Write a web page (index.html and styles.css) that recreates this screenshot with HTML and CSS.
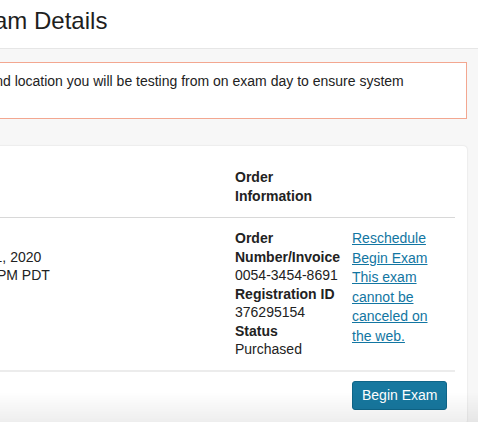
FILE: index.html
```html
<!DOCTYPE html>
<html lang="en">
<head>
<meta charset="utf-8">
<title>Exam Details</title>
<link rel="stylesheet" href="styles.css">
</head>
<body>
<header class="topbar">
  <div class="inner">
    <h1 class="title">Exam Details</h1>
  </div>
</header>
<main class="page">
  <div class="alert">Please verify your computer and location you will be testing from on exam day to ensure system compatibility.</div>
  <section class="card">
    <div class="row head">
      <div class="cell">Exam</div>
      <div class="cell">When</div>
      <div class="cell">Order Information</div>
      <div class="cell"></div>
    </div>
    <div class="row body">
      <div class="cell"><b>Exam</b><br>Cloud Practitioner</div>
      <div class="cell"><b>Date</b><br>July 21, 2020<br>12:00 PM PDT</div>
      <div class="cell">
        <b>Order Number/Invoice</b><br>0054-3454-8691<br>
        <b>Registration ID</b><br>376295154<br>
        <b>Status</b><br>Purchased
      </div>
      <div class="cell links">
        <a href="#">Reschedule</a>
        <a href="#">Begin Exam</a>
        <a href="#">This exam cannot be canceled on the web.</a>
      </div>
    </div>
    <div class="row foot">
      <button class="btn" type="button">Begin Exam</button>
    </div>
  </section>
</main>
<div class="fade"></div>
</body>
</html>
```
FILE: styles.css
```css
html, body {
  margin: 0;
  padding: 0;
  overflow: hidden;
}
body {
  background: #f7f7f7;
  font-family: "Liberation Sans", Arial, sans-serif;
  font-size: 14px;
  color: #222;
  width: 478px;
  height: 422px;
}
.topbar {
  background: #fff;
  border-bottom: 1px solid #e6e6e6;
  height: 48px;
}
.inner {
  margin-left: -250px;
  width: 717px;
  padding-top: 7px;
}
.title {
  margin: 0;
  padding-left: 216px;
  font-size: 24px;
  line-height: 28px;
  font-weight: normal;
  color: #1e1e1e;
}
.page {
  margin-left: -250px;
  width: 717px;
  padding-top: 13px;
}
.alert {
  margin-left: 44px;
  background: #fff;
  border: 1px solid #f3a790;
  padding: 9px 15px 10px;
  line-height: 18px;
  color: #222;
}
.card {
  margin-top: 27px;
  background: #fff;
  border-radius: 4px;
  box-shadow: 0 0 2px rgba(0, 0, 0, 0.14);
  padding: 12px 12px 14px;
}
.row {
  display: grid;
  grid-template-columns: 196px 277px 117px 1fr;
}
.head {
  font-weight: bold;
  line-height: 19px;
  padding: 10px 0 11px;
  border-bottom: 1px solid #d8d8d8;
}
.head .cell {
  padding-right: 12px;
}
.body {
  padding: 11px 0 11px;
  line-height: 18.5px;
  border-bottom: 2px solid #ececec;
}
.body .cell {
  padding-right: 12px;
}
.links {
  display: flex;
  flex-direction: column;
  line-height: 19.5px;
}
.links a {
  color: #1276a2;
  text-decoration: underline;
}
.foot {
  padding-top: 9px;
}
.btn {
  grid-column: 4;
  justify-self: start;
  font-family: "Liberation Sans", Arial, sans-serif;
  font-size: 14px;
  line-height: 17px;
  color: #fff;
  background: #17789f;
  border: 1px solid #0f6588;
  border-radius: 3px;
  padding: 5px 9px;
  cursor: pointer;
}
.fade {
  position: fixed;
  left: 0;
  right: 0;
  bottom: 0;
  height: 30px;
  background: linear-gradient(rgba(0, 0, 0, 0), rgba(0, 0, 0, 0.065));
  pointer-events: none;
}
```
